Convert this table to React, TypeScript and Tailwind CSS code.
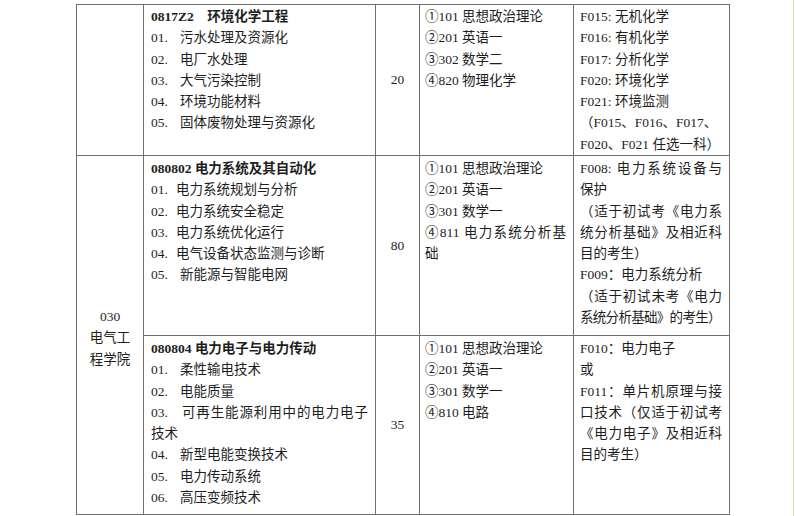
import React from "react";

type L = { t: React.ReactNode; j?: boolean; tight?: boolean };

const Line = ({ t, j, tight }: L) => (
  <div
    className={`whitespace-pre ${j ? "[text-align-last:justify]" : ""} ${tight ? "tracking-[-0.7px]" : ""}`}
  >
    {t}
  </div>
);

const Item = ({ n, w, text, j }: { n: string; w: string; text: string; j?: boolean }) => (
  <div className={`whitespace-nowrap ${j ? "[text-align-last:justify]" : ""}`}>
    <span className={`inline-block ${w}`}>{n}</span>
    {text}
  </div>
);

const cell = "border-r border-b border-[#707070] overflow-hidden";

export default function App() {
  return (
    <div className="w-[795px] h-[516px] bg-white overflow-hidden">
      <div className="w-[794px] h-[516px] border-r border-[#e9d7b6] pt-[4px] pl-[76px]">
        <div className="grid grid-cols-[67px_232px_44px_154px_156px] grid-rows-[151px_180px_179px] border-l border-t border-[#707070] w-[654px] text-[13.5px] leading-[21.3px] text-[#1e1e1e] font-['Liberation_Serif','Noto_Sans_CJK_SC',serif]">
          {/* row 1 */}
          <div className={cell}></div>
          <div className={`${cell} pl-[7px] pr-[7px] pt-[1px]`}>
            <div className="whitespace-pre font-bold">0817Z2{"\u3000"}环境化学工程</div>
            <Item n="01." w="w-[29px]" text="污水处理及资源化" />
            <Item n="02." w="w-[29px]" text="电厂水处理" />
            <Item n="03." w="w-[29px]" text="大气污染控制" />
            <Item n="04." w="w-[29px]" text="环境功能材料" />
            <Item n="05." w="w-[29px]" text="固体废物处理与资源化" />
          </div>
          <div className={`${cell} flex items-center justify-center`}>20</div>
          <div className={`${cell} pl-[5px] pr-[7px] pt-[1px]`}>
            <Line t="①101 思想政治理论" />
            <Line t="②201 英语一" />
            <Line t="③302 数学二" />
            <Line t="④820 物理化学" />
          </div>
          <div className={`${cell} pl-[6px] pr-[7px] pt-[1px]`}>
            <Line t="F015: 无机化学" />
            <Line t="F016: 有机化学" />
            <Line t="F017: 分析化学" />
            <Line t="F020: 环境化学" />
            <Line t="F021: 环境监测" />
            <Line t="（F015、F016、F017、" />
            <Line t="F020、F021 任选一科）" />
          </div>

          {/* row 2 + 3 college cell */}
          <div className={`${cell} row-span-2 flex flex-col items-center justify-center pt-[6px]`}>
            <div>030</div>
            <div>电气工</div>
            <div>程学院</div>
          </div>

          {/* row 2 */}
          <div className={`${cell} pl-[7px] pr-[7px] pt-[2px]`}>
            <div className="whitespace-pre font-bold">080802 电力系统及其自动化</div>
            <Item n="01." w="w-[25px]" text="电力系统规划与分析" />
            <Item n="02." w="w-[25px]" text="电力系统安全稳定" />
            <Item n="03." w="w-[25px]" text="电力系统优化运行" />
            <Item n="04." w="w-[25px]" text="电气设备状态监测与诊断" />
            <Item n="05." w="w-[29px]" text="新能源与智能电网" />
          </div>
          <div className={`${cell} flex items-center justify-center`}>80</div>
          <div className={`${cell} pl-[5px] pr-[7px] pt-[2px]`}>
            <Line t="①101 思想政治理论" />
            <Line t="②201 英语一" />
            <Line t="③301 数学一" />
            <Line t="④811 电力系统分析基" j />
            <Line t="础" />
          </div>
          <div className={`${cell} pl-[6px] pr-[7px] pt-[2px]`}>
            <Line t="F008: 电力系统设备与" j />
            <Line t="保护" />
            <Line t="（适于初试考《电力系" j />
            <Line t="统分析基础》及相近科" j />
            <Line t="目的考生）" />
            <Line t="F009：电力系统分析" />
            <Line t="（适于初试未考《电力" j />
            <Line t="系统分析基础》的考生）" tight />
          </div>

          {/* row 3 */}
          <div className={`${cell} pl-[7px] pr-[7px] pt-[2px]`}>
            <div className="whitespace-pre font-bold">080804 电力电子与电力传动</div>
            <Item n="01." w="w-[29px]" text="柔性输电技术" />
            <Item n="02." w="w-[29px]" text="电能质量" />
            <Item n="03." w="w-[30px]" text="可再生能源利用中的电力电子" j />
            <div>技术</div>
            <Item n="04." w="w-[29px]" text="新型电能变换技术" />
            <Item n="05." w="w-[29px]" text="电力传动系统" />
            <Item n="06." w="w-[29px]" text="高压变频技术" />
          </div>
          <div className={`${cell} flex items-center justify-center`}>35</div>
          <div className={`${cell} pl-[5px] pr-[7px] pt-[2px]`}>
            <Line t="①101 思想政治理论" />
            <Line t="②201 英语一" />
            <Line t="③301 数学一" />
            <Line t="④810 电路" />
          </div>
          <div className={`${cell} pl-[6px] pr-[7px] pt-[2px]`}>
            <Line t="F010：电力电子" />
            <Line t="或" />
            <Line t="F011：单片机原理与接" j />
            <Line t="口技术（仅适于初试考" j />
            <Line t="《电力电子》及相近科" j />
            <Line t="目的考生）" />
          </div>
        </div>
      </div>
    </div>
  );
}
